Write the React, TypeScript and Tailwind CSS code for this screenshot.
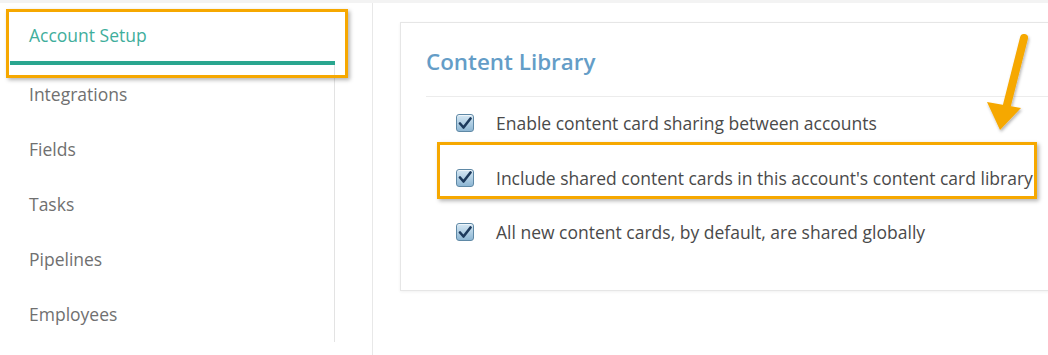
import React from "react";

const menu = ["Integrations", "Fields", "Tasks", "Pipelines", "Employees"];

const options = [
  "Enable content card sharing between accounts",
  "Include shared content cards in this account's content card library",
  "All new content cards, by default, are shared globally",
];

const CheckBox = () => (
  <div className="w-[18px] h-[18px] shrink-0 rounded-[3px] border border-[#5f89a6] bg-gradient-to-b from-[#d6e8f4] to-[#8db6d3] flex items-center justify-center shadow-[inset_0_1px_0_rgba(255,255,255,0.6)]">
    <svg width="14" height="13" viewBox="0 0 14 13">
      <path d="M2 6.5 L5.5 10.5 L12.5 1.5" fill="none" stroke="#1d3a5c" strokeWidth="2.6" strokeLinecap="round" strokeLinejoin="round" />
    </svg>
  </div>
);

export default function App() {
  return (
    <div className="relative w-[1048px] h-[355px] overflow-hidden bg-white font-['Open_Sans',sans-serif]">
      <div className="h-[3px] bg-[#f3f3f3]" />
      <div className="flex h-[352px]">
        {/* sidebar */}
        <div className="w-[373px] shrink-0 border-r border-[#e8e8e8]">
          <div className="ml-[10px] w-[325px] pt-[7px]">
            <div className="h-[55px] border-b-[4px] border-[#2aa68f] pl-[19px] flex items-center text-[17.5px] text-[#3fae9c]">
              Account Setup
            </div>
            <div className="border-r border-[#e3e3e3] pt-[2px]">
              {menu.map((m) => (
                <div key={m} className="h-[55px] pl-[19px] flex items-center text-[17.5px] text-[#707070]">
                  {m}
                </div>
              ))}
            </div>
          </div>
        </div>

        {/* main */}
        <div className="flex-1 pl-[27px] pt-[19px]">
          <div className="w-[700px] h-[269px] border border-[#e6e6e6] bg-white shadow-[0_1px_3px_rgba(0,0,0,0.06)] pl-[25px] pt-[24px]">
            <h2 className="text-[22.4px] leading-[30px] font-semibold text-[#649dc7]">Content Library</h2>
            <div className="mt-[19px] border-t border-[#ececec]" />
            <div className="-mt-[1px] pl-[30px]">
              {options.map((o) => (
                <div key={o} className="h-[54.5px] flex items-center gap-[22px]">
                  <CheckBox />
                  <span className="text-[17.5px] text-[#4a4a4a] whitespace-nowrap">{o}</span>
                </div>
              ))}
            </div>
          </div>
        </div>
      </div>

      {/* annotation boxes */}
      <div className="absolute left-[6px] top-[9px] w-[342px] h-[69px] border-[3px] border-[#f6a800] shadow-[2px_2px_4px_rgba(0,0,0,0.3)]" />
      <div className="absolute left-[437px] top-[142px] w-[600px] h-[57px] border-[3px] border-[#f6a800] shadow-[2px_2px_4px_rgba(0,0,0,0.3)]" />

      {/* arrow */}
      <svg className="absolute left-[975px] top-[25px]" width="70" height="115" viewBox="0 0 70 115">
        <defs>
          <filter id="sh" x="-30%" y="-30%" width="160%" height="160%">
            <feDropShadow dx="1" dy="2" stdDeviation="1.5" floodColor="#000" floodOpacity="0.3" />
          </filter>
        </defs>
        <g filter="url(#sh)">
          <path d="M49 13 L32 80" stroke="#f6a800" strokeWidth="8" strokeLinecap="round" fill="none" />
          <path d="M12 77 L46 83 L25 105 Z" fill="#f6a800" />
        </g>
      </svg>
    </div>
  );
}
